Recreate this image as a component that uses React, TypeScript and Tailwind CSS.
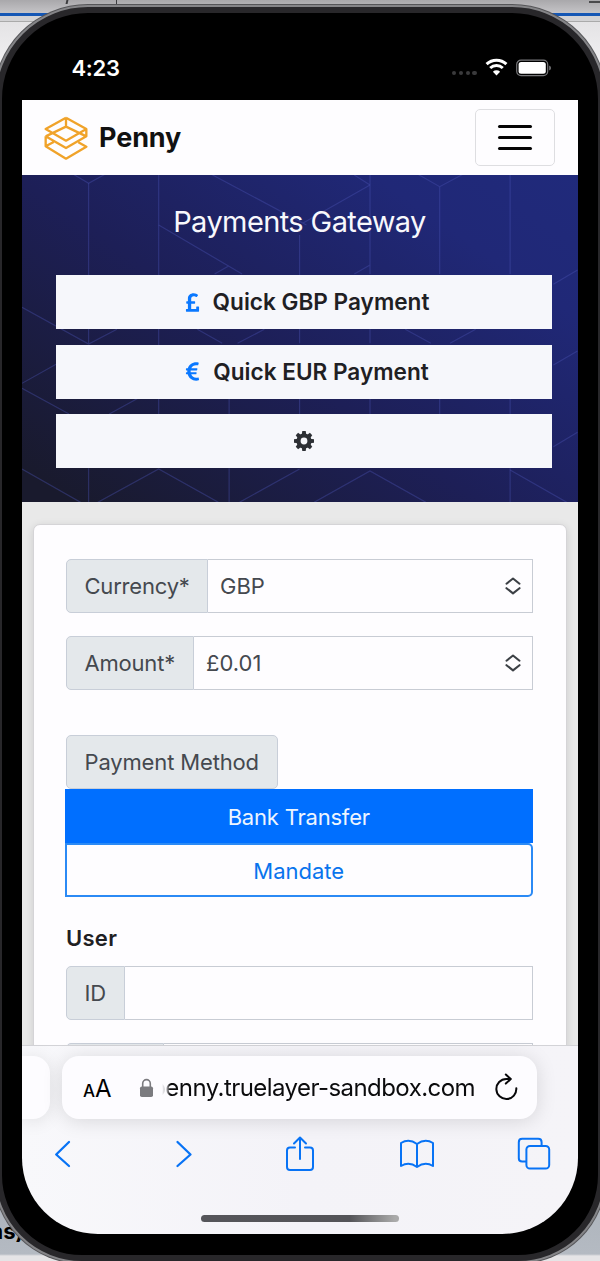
import React from "react";
import { FaEuroSign, FaPoundSign } from "react-icons/fa";

const hexLines = [
  "M190 12L231 40L275 12", "M231 40V520", "M414 15V732", "M414 165L632 312M560 312L598 287",
  "M550 12L800 165M966 45L790 160M925 15L966 45", "M966 15V312M966 285L925 312M782 195V520",
  "M1090 12L1148 50L1210 12M1148 50V312M1332 15V312",
  "M1445 343L1508 300M1445 585L1508 543M1445 830L1508 787",
  "M57 412L231 522L305 478M57 640L146 583M57 655L180 732M57 897L210 997M285 732L360 685",
  "M515 478L580 520M620 520L690 478M1058 478L1125 520M1175 520L1242 478M966 478V520",
  "M598 685V732M782 685V732M966 685V732M1148 685V732M1332 685V732",
  "M231 895V997M598 895V997M1332 895V997",
  "M255 997L414 897L570 997M625 997L782 897M820 997L966 903L1112 997M1332 900L1480 997",
];

const gearTeeth = [0, 45, 90, 135, 180, 225, 270, 315];

function GearIcon() {
  return (
    <svg width="20" height="22" viewBox="-10 -11 20 22" fill="#2d3035">
      {gearTeeth.map((angle) => (
        <path key={angle} d="M-2.3 -6L-1.7 -10H1.7L2.3 -6Z" transform={`rotate(${angle})`} />
      ))}
      <circle r="5.5" fill="none" stroke="#2d3035" strokeWidth="4.2" />
    </svg>
  );
}

function StatusBar() {
  return (
    <div className="flex h-[87px] items-start pl-[69.5px] pr-[46.5px] pt-[42px] text-white">
      <div className="text-[22px] leading-[26px] font-semibold tracking-[-0.3px]">4:23</div>
      <div className="ml-auto flex h-[26px] items-center">
        <div className="mt-[10px] flex gap-[2.6px]">
          {[0, 1, 2, 3].map((i) => (
            <span key={i} className="size-[4.2px] rounded-full bg-[#3a3a3c]" />
          ))}
        </div>
        <svg className="ml-[8px] mt-[-2px]" width="23" height="18" viewBox="0 0 23 18">
          <path d="M1.6 6.2A14.2 14.2 0 0 1 21.4 6.2M5.2 10A9.2 9.2 0 0 1 17.8 10" fill="none" stroke="#fff" strokeWidth="3" />
          <path d="M11.5 17.4L7.9 13.8A5.2 5.2 0 0 1 15.1 13.8Z" fill="#fff" />
        </svg>
        <svg className="ml-[8px]" width="36" height="18" viewBox="0 0 36 18">
          <rect x="0.7" y="1.2" width="31" height="15.4" rx="4.3" fill="none" stroke="#77777a" strokeWidth="1.2" />
          <rect x="2.6" y="3" width="27.2" height="11.8" rx="2.5" fill="#fff" />
          <path d="M33.2 6.6Q35 7.2 35 9T33.2 11.4Z" fill="#77777a" />
        </svg>
      </div>
    </div>
  );
}

function Navbar() {
  return (
    <div className="flex h-[75px] items-center bg-[#fefdff] pl-[22px] pr-[23px]">
      <svg width="44" height="44" viewBox="0 0 132 132" fill="none" stroke="#f0a32a" strokeWidth="7" strokeLinejoin="round">
        <path d="M66 5L127 39V61L66 96L5 61M66 5L5 39L66 74L127 39M66 5V34M5 61L66 32L127 61M5 61V91L66 128L127 92L103 79M5 91L29 78" />
      </svg>
      <span className="ml-[11px] text-[27px] leading-8 font-bold tracking-[-0.1px] text-[#111]">Penny</span>
      <button className="ml-auto flex h-[57px] w-[80px] flex-col items-center justify-center gap-[8.6px] rounded-[5px] border border-[#dedee1]">
        <span className="h-[2.7px] w-[34px] rounded-full bg-[#050505]" />
        <span className="h-[2.7px] w-[34px] rounded-full bg-[#050505]" />
        <span className="h-[2.7px] w-[34px] rounded-full bg-[#050505]" />
      </button>
    </div>
  );
}

function QuickButton({ children }: { children: React.ReactNode }) {
  return (
    <button className="flex h-[54px] w-[496px] items-center justify-center bg-[#f6f7fb] text-[22.6px] font-semibold text-[#1f2023]">
      {children}
    </button>
  );
}

function Hero() {
  return (
    <div className="relative h-[327px] bg-[linear-gradient(35deg,#191a2d_5%,#1d1f57_45%,#202877_80%,#202a7b_100%)]">
      <svg className="absolute inset-0 h-full w-full" viewBox="57 15 1451 981" preserveAspectRatio="none" fill="none" stroke="#4c55b5" strokeOpacity="0.38">
        {hexLines.map((d) => (
          <path key={d} d={d} strokeWidth="1.2" vectorEffect="non-scaling-stroke" />
        ))}
      </svg>
      <div className="relative flex h-full flex-col pl-[34px]">
        <h1 className="mt-[28px] h-[36px] w-[487px] text-center text-[29px] leading-[38px] font-normal tracking-[-0.6px] text-[#f8f8fc]">Payments Gateway</h1>
        <div className="mt-[36px] flex flex-col gap-[15.6px]">
          <QuickButton>
            <FaPoundSign className="ml-[3px] mr-[10px] text-[#0a78ff]" size={21} />
            Quick GBP Payment
          </QuickButton>
          <QuickButton>
            <FaEuroSign className="ml-[3px] mr-[10px] text-[#0a78ff]" size={21} />
            Quick EUR Payment
          </QuickButton>
          <QuickButton>
            <GearIcon />
          </QuickButton>
        </div>
      </div>
    </div>
  );
}

const tagClass =
  "flex h-full items-center rounded-l-[5px] border border-[#c8ced8] bg-[#e4e8eb] pl-[17.5px] text-[22px] tracking-[-0.2px] text-[#45494f]";

function SelectRow({ label, value, labelWidth }: { label: string; value: string; labelWidth: string }) {
  return (
    <div className="flex h-[54px] w-[467px]">
      <div className={tagClass + " " + labelWidth}>{label}</div>
      <div className="flex flex-1 items-center justify-between border border-l-0 border-[#c8ccd4] pl-[12px] pr-[11px] text-[22px] text-[#45494f]">
        {value}
        <svg width="16" height="18" viewBox="0 0 16 18" fill="none" stroke="#3c4045" strokeWidth="2.1" strokeLinecap="round" strokeLinejoin="round">
          <path d="M1.5 6.7L8 1.5L14.5 6.7M1.5 11.2L8 16.4L14.5 11.2" />
        </svg>
      </div>
    </div>
  );
}

function PaymentForm() {
  return (
    <div className="h-[543px] overflow-hidden bg-[#e9e9e9] pl-[10.5px] pt-[22px]">
      <div className="h-[540px] w-[534px] rounded-[7px] border border-[#d5d4d7] bg-[#fefdff] pl-[32.5px] pt-[34px] shadow-[0_2px_8px_rgba(0,0,0,0.12)]">
        <SelectRow label="Currency*" value="GBP" labelWidth="w-[142px]" />
        <div className="mt-[23px]">
          <SelectRow label="Amount*" value="£0.01" labelWidth="w-[128px]" />
        </div>
        <div className="mt-[45px] flex h-[54px] w-[212px] items-center rounded-[5px] border border-[#c8ced8] bg-[#e4e8eb] pl-[17.5px] pt-[1px] text-[22px] tracking-[-0.15px] text-[#45494f]">
          Payment Method
        </div>
        <div className="ml-[-1.5px] w-[468.5px] text-[22px] tracking-[-0.2px]">
          <div className="flex h-[54px] items-center justify-center bg-[#006fff] pt-[2px] text-[#edf5ff]">Bank Transfer</div>
          <div className="flex h-[54px] items-center justify-center rounded-r-[5px] border-2 border-[#2b8af5] pt-[2px] text-[#0874ed] tracking-normal">Mandate</div>
        </div>
        <div className="mt-[26px] h-[30px] text-[22px] leading-[30px] font-semibold tracking-[0.3px] text-[#1f2023]">User</div>
        <div className="mt-[13px] flex h-[54px] w-[467px]">
          <div className={tagClass + " w-[59px]"}>ID</div>
          <div className="flex-1 border border-l-0 border-[#c8ccd4]" />
        </div>
        <div className="mt-[23px] flex h-[54px] w-[467px]">
          <div className={tagClass + " w-[98px]"} />
          <div className="flex-1 border border-l-0 border-[#c8ccd4]" />
        </div>
      </div>
    </div>
  );
}

function BrowserBar() {
  return (
    <div className="h-[189px] border-t border-[#d3d3d7] bg-[linear-gradient(90deg,#f8f8fb,#f4f3f8_50%,#f5f4f8)]">
      <div className="flex h-[73px] overflow-visible pt-[10px]">
        <div className="h-[63px] w-[28px] rounded-r-[17px] bg-[#fdfcff] shadow-[0_2px_18px_rgba(0,0,0,0.10)]" />
        <div className="ml-[12px] flex h-[63px] w-[475px] items-center rounded-[17px] bg-[#fdfcff] pl-[21px] shadow-[0_2px_20px_rgba(0,0,0,0.13)]">
          <div className="mt-[3px] flex w-[55.5px] items-baseline leading-none text-black">
            <span className="text-[17px] font-medium">A</span>
            <span className="text-[24px]">A</span>
          </div>
          <svg width="15" height="20" viewBox="0 0 15 20">
            <rect x="1" y="8.4" width="13" height="10.6" rx="1.8" fill="#7b7b7f" />
            <path d="M3.7 9V5.4a3.8 3.8 0 0 1 7.6 0V9" fill="none" stroke="#7b7b7f" strokeWidth="1.6" />
          </svg>
          <div className="ml-[8px] mt-[1px] flex w-[313.5px] justify-end overflow-hidden whitespace-nowrap text-[24px] leading-8 tracking-[-0.56px] text-[#0b0b0d] [mask-image:linear-gradient(90deg,transparent_0,rgba(0,0,0,0.4)_5px,black_8px)]">
            <span>penny.truelayer-sandbox.com</span>
          </div>
          <svg className="ml-[18.5px] mt-[-2px]" width="25" height="28" viewBox="0 0 25 28" fill="none" stroke="#08080a" strokeWidth="2" strokeLinecap="round" strokeLinejoin="round">
            <path d="M22.3 15.2A10 10 0 1 1 12.3 6H16M11.8 1.5L16.8 6L11.8 10.6" />
          </svg>
        </div>
      </div>
      <div className="mt-[15px] flex h-[40px] items-center text-[#0873f5]">
        <svg className="ml-[32px]" width="18" height="28" viewBox="0 0 18 28" fill="none" stroke="currentColor" strokeWidth="2.3" strokeLinecap="round" strokeLinejoin="round">
          <path d="M15 2L2.2 14.5L15 26" />
        </svg>
        <svg className="ml-[103px]" width="18" height="28" viewBox="0 0 18 28" fill="none" stroke="currentColor" strokeWidth="2.3" strokeLinecap="round" strokeLinejoin="round">
          <path d="M2.5 2L15.5 14.5L2.5 26" />
        </svg>
        <svg className="ml-[91.5px]" width="30" height="38" viewBox="0 0 30 38" fill="none" stroke="currentColor" strokeWidth="2" strokeLinecap="round" strokeLinejoin="round">
          <path d="M10 12.5H5Q2 12.5 2 15.5V32Q2 35 5 35H25Q28 35 28 32V15.5Q28 12.5 25 12.5H20M15 24V3M9 8.5L15 2.5L21 8.5" />
        </svg>
        <svg className="ml-[84.5px]" width="36" height="30" viewBox="0 0 36 30" fill="none" stroke="currentColor" strokeWidth="2" strokeLinecap="round" strokeLinejoin="round">
          <path d="M18 5Q10 -1 2 4V27Q10 22 18 28Q26 22 34 27V4Q26 -1 18 5V28" />
        </svg>
        <svg className="ml-[82px]" width="34" height="34" viewBox="0 0 34 34" fill="none" stroke="currentColor" strokeWidth="2" strokeLinejoin="round">
          <path d="M9.4 24.6H5.2Q1.8 24.6 1.8 21.2V5.2Q1.8 1.8 5.2 1.8H21.2Q24.6 1.8 24.6 5.2V9" />
          <rect x="9.4" y="9" width="22.8" height="22.6" rx="3.6" />
        </svg>
      </div>
      <div className="ml-[179px] mt-[41px] h-[7px] w-[198px] rounded-full bg-[linear-gradient(90deg,#55555a,#545458_75%,#aaa_98%)]" />
    </div>
  );
}

export default function App() {
  return (
    <div className="relative h-[1261px] w-[600px] overflow-hidden bg-[linear-gradient(180deg,#a9a8ab_0,#c5c4c7_13px,#1557b5_13px,#1557b5_16px,#d3d3d5_16px,#d3d3d5_21px,#aaa_21px,#aaa_22px,#e4e3e5_22px,#f0eff1_60px,#aeb4bc_1200px,#b4bac2_1254px,#e5e4e6_1256px)] font-['Inter','Liberation_Sans',sans-serif]">
      <div className="absolute left-[66px] top-0 h-[4px] w-[2px] skew-x-[-12deg] bg-[#3c3c3e]" />
      <div className="absolute left-[115.5px] top-0 h-[5px] w-[1.5px] bg-[#3c3c3e]" />
      <div className="absolute left-[589px] top-[1px] h-[2px] w-[11px] bg-[#4a4a4c]" />
      <div className="absolute left-[-24px] top-[1217px] text-[22px] leading-7 font-bold text-black">ons)</div>
      <div className="relative ml-[-4px] mt-[7px] h-[1254px] w-[608px] overflow-hidden rounded-t-[92px] rounded-b-[86px] border-[6px] border-[#28272a] bg-black shadow-[0_0_0_2px_#858588,0_0_0_3px_#555558]">
        <StatusBar />
        <div className="ml-[20px] h-[1134px] w-[555.5px] overflow-hidden rounded-b-[76px]">
          <Navbar />
          <Hero />
          <PaymentForm />
          <BrowserBar />
        </div>
      </div>
    </div>
  );
}
